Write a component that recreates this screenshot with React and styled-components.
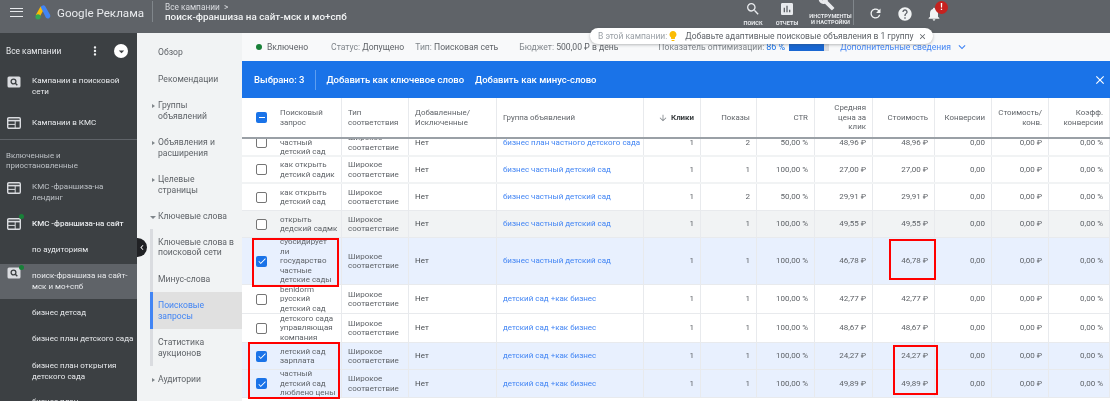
import React from "react"
import styled, { createGlobalStyle } from "styled-components"
import {
  MdSearch,
  MdAssessment,
  MdBuild,
  MdRefresh,
  MdHelp,
  MdNotifications,
  MdClose,
  MdLightbulb,
  MdArrowDownward,
  MdExpandMore,
  MdChevronLeft,
  MdMoreVert,
  MdArrowDropDown,
  MdCheck,
} from "react-icons/md"

const columns = "100px 67px 88px 147px 57px 56px 58px 58px 62px 57px 57px 61px"

const GlobalStyle = createGlobalStyle`
  html, body {
    margin: 0;
    padding: 0;
    background: #fff;
  }
  body {
    font-family: Roboto, "Liberation Sans", sans-serif;
    -webkit-font-smoothing: antialiased;
  }
`

const Shell = styled.div`
  position: relative;
  width: 1110px;
  height: 401px;
  overflow: hidden;
  display: flex;
  flex-direction: column;
  filter: blur(0.35px);
  will-change: transform;
`

const TopBar = styled.header`
  flex: 0 0 33px;
  display: flex;
  align-items: center;
  background: #5f6368;
  color: #fff;
  padding-right: 162px;
  overflow: hidden;
`

const Burger = styled.div`
  width: 13px;
  height: 9px;
  margin-left: 10px;
  border-top: 1.5px solid #e8eaed;
  border-bottom: 1.5px solid #e8eaed;
  position: relative;
  box-sizing: border-box;
  margin-top: -9px;
  &:after {
    content: "";
    position: absolute;
    left: 0;
    right: 0;
    top: 2.2px;
    height: 1.5px;
    background: #e8eaed;
  }
`

const Logo = styled.svg`
  width: 16px;
  height: 15px;
  margin-left: 12px;
  margin-top: -9px;
`

const Brand = styled.div`
  margin-left: 6px;
  margin-top: -8px;
  width: 87px;
  font-size: 11.6px;
  color: #e8eaed;
  white-space: nowrap;
`

const TopDivider = styled.div`
  width: 1px;
  height: 21px;
  margin: -10px 0 0 8px;
  background: #80868b;
`

const Crumbs = styled.div`
  margin: -9px 0 0 12px;
  line-height: 10px;
`

const CrumbTop = styled.div`
  font-size: 8.3px;
  color: #dadce0;
`

const CrumbTitle = styled.div`
  font-size: 9.85px;
  font-weight: 500;
  color: #f1f3f4;
  white-space: nowrap;
`

const Tools = styled.div`
  margin-left: auto;
  display: flex;
  align-items: flex-start;
  height: 33px;
`

const Tool = styled.div`
  width: ${(p) => p.$w}px;
  height: 33px;
  margin-left: ${(p) => p.$ml || 0}px;
  display: flex;
  flex-direction: column;
  align-items: center;
  box-sizing: border-box;
  padding-top: 1px;
  font-size: 5.6px;
  font-weight: 700;
  line-height: 6px;
  text-align: center;
  color: #e8eaed;
  text-transform: uppercase;
  svg {
    flex: 0 0 auto;
    margin-bottom: 3px;
  }
`

const ToolsDivider = styled.div`
  width: 1px;
  height: 25px;
  margin-right: 7px;
  background: #80868b;
`

const IconButton = styled.div`
  position: relative;
  width: 29px;
  height: 27px;
  display: flex;
  align-items: center;
  justify-content: center;
  color: #f1f3f4;
`

const Badge = styled.span`
  position: absolute;
  top: 1px;
  left: 16px;
  width: 13px;
  height: 13px;
  border-radius: 50%;
  background: #c5221f;
  color: #fff;
  font-size: 9px;
  font-weight: 700;
  line-height: 13px;
  text-align: center;
`

const Body = styled.div`
  flex: 1;
  display: flex;
  min-height: 0;
`

const Sidebar = styled.aside`
  flex: 0 0 137px;
  background: #3c4043;
  color: #e8eaed;
  font-size: 8px;
  line-height: 10.5px;
  overflow: hidden;
`

const SideHead = styled.div`
  height: 36px;
  display: flex;
  align-items: center;
  padding: 0 9px 0 6px;
  box-sizing: border-box;
  font-size: 8.4px;
  svg {
    color: #f1f3f4;
  }
`

const HeadDots = styled.div`
  margin-left: auto;
  display: flex;
`

const HeadRound = styled.div`
  width: 14px;
  height: 14px;
  margin-left: 12px;
  border-radius: 50%;
  background: #fff;
  display: flex;
  align-items: center;
  justify-content: center;
  svg {
    color: #3c4043;
  }
`

const SideItem = styled.div`
  position: relative;
  display: flex;
  align-items: center;
  height: ${(p) => p.$h || 26}px;
  margin-bottom: ${(p) => p.$mb || 0}px;
  padding: 0 1px 0 32px;
  box-sizing: border-box;
  color: ${(p) => (p.$muted ? "#bdc1c6" : "#e8eaed")};
  font-weight: ${(p) => (p.$strong ? 500 : 400)};
  background: ${(p) => (p.$active ? "#5f6368" : "transparent")};
  &:after {
    content: "";
    display: ${(p) => (p.$dot ? "block" : "none")};
    position: absolute;
    left: 19px;
    top: ${(p) => (p.$dot === "top" ? 1 : 3)}px;
    width: 5px;
    height: 5px;
    border-radius: 50%;
    background: #188038;
  }
`

const SideIcon = styled.svg`
  position: absolute;
  left: 7px;
  top: 50%;
  margin-top: ${(p) => p.$mt || -6}px;
  width: 14px;
  height: 12px;
`

const SideRule = styled.div`
  height: 1px;
  margin-top: 3px;
  background: #5f6368;
`

const SideLabel = styled.div`
  height: 35px;
  padding: 11px 4px 0 6px;
  box-sizing: border-box;
  color: #bdc1c6;
  font-size: 7.9px;
  line-height: 9.5px;
`

const Collapse = styled.div`
  position: absolute;
  left: 137px;
  top: 238px;
  width: 10px;
  height: 19px;
  border-radius: 0 10px 10px 0;
  background: #202124;
  color: #fff;
  display: flex;
  align-items: center;
  justify-content: center;
  z-index: 3;
`

const Nav = styled.nav`
  flex: 0 0 105px;
  background: #f1f3f4;
  color: #5f6368;
  font-size: 8.6px;
  line-height: 10.5px;
  padding-top: 6px;
  box-sizing: border-box;
  overflow: hidden;
`

const NavItem = styled.div`
  position: relative;
  padding: 8px 6px 8px 21px;
`

const NavCaret = styled.span`
  position: absolute;
  left: 13px;
  top: ${(p) => (p.$open ? 13 : 12)}px;
  width: 0;
  height: 0;
  ${(p) =>
    p.$open
      ? `border-left: 3px solid transparent; border-right: 3px solid transparent; border-top: 3px solid #80868b;`
      : `border-top: 2.5px solid transparent; border-bottom: 2.5px solid transparent; border-left: 3px solid #80868b; left: 15px;`}
`

const SubNav = styled.div`
  margin-left: 13px;
  border-left: 3px solid #dadce0;
  margin-top: -1px;
`

const SubItem = styled.div`
  padding: 8px 6px 8px 5px;
  background: ${(p) => (p.$active ? "#e0e0e0" : "transparent")};
  color: ${(p) => (p.$active ? "#4285f4" : "#5f6368")};
  position: relative;
  &:before {
    content: "";
    display: ${(p) => (p.$active ? "block" : "none")};
    position: absolute;
    left: -3px;
    top: 0;
    bottom: 0;
    width: 3px;
    background: #4285f4;
  }
`

const Main = styled.main`
  flex: 1;
  min-width: 0;
  display: flex;
  flex-direction: column;
  background: #fff;
`

const StatusRow = styled.div`
  flex: 0 0 28px;
  display: flex;
  align-items: center;
  background: #f8f9fa;
  font-size: 8.6px;
  color: #80868b;
  padding-left: 14px;
  box-sizing: border-box;
  white-space: nowrap;
`

const StatusItem = styled.span`
  margin-left: ${(p) => p.$ml || 0}px;
  b {
    font-weight: 400;
    color: #5f6368;
  }
`

const GreenDot = styled.span`
  width: 6px;
  height: 6px;
  border-radius: 50%;
  background: #188038;
  margin-right: 5px;
`

const Score = styled.span`
  color: #1a73e8;
  margin-left: 2px;
  font-size: 9px;
`

const ScoreBar = styled.span`
  display: block;
  width: 40px;
  height: 7px;
  margin-left: 4px;
  background: #dadce0;
  span {
    display: block;
    height: 100%;
    background: #1967d2;
  }
`

const MoreLink = styled.span`
  display: flex;
  align-items: center;
  margin-left: 11px;
  color: #4285f4;
  svg {
    margin-left: 4px;
  }
`

const SelectBar = styled.div`
  flex: 0 0 37px;
  display: flex;
  align-items: center;
  background: #1a73e8;
  color: #fff;
  font-size: 9.5px;
  font-weight: 500;
  padding-left: 12px;
  box-sizing: border-box;
  white-space: nowrap;
`

const BarSplit = styled.span`
  width: 1px;
  height: 20px;
  margin: 0 10px 0 11px;
  background: #5e9ef0;
`

const BarAction = styled.span`
  margin-right: 11px;
`

const BarClose = styled.span`
  margin-left: auto;
  margin-right: 3px;
  display: flex;
`

const HeadRow = styled.div`
  flex: 0 0 41px;
  display: grid;
  grid-template-columns: ${columns};
  box-sizing: border-box;
  border-bottom: 2px solid #9aa0a6;
  font-size: 7.9px;
  line-height: 9.4px;
  color: #5f6368;
`

const HeadCell = styled.div`
  display: flex;
  align-items: center;
  justify-content: ${(p) => (p.$right ? "flex-end" : "flex-start")};
  text-align: ${(p) => (p.$right ? "right" : "left")};
  padding: ${(p) => (p.$first ? "0 4px 0 14px" : "0 6px")};
  border-right: 1px solid #e8eaed;
  font-weight: ${(p) => (p.$sorted ? 700 : 400)};
  color: ${(p) => (p.$sorted ? "#3c4043" : "#5f6368")};
  svg {
    margin-right: 3px;
    color: #80868b;
  }
`

const FirstCell = styled.div`
  display: flex;
  align-items: center;
  width: 100%;
`

const Box = styled.span`
  flex: 0 0 11px;
  width: 11px;
  height: 11px;
  margin-right: 13px;
  box-sizing: border-box;
  border-radius: 2px;
  display: flex;
  align-items: center;
  justify-content: center;
  color: #fff;
  border: ${(p) => (p.$on ? "none" : "1.3px solid #757575")};
  background: ${(p) => (p.$on ? "#1a73e8" : "#fff")};
`

const MinusBar = styled.span`
  display: block;
  width: 6px;
  height: 1.6px;
  background: #fff;
`

const Scroller = styled.div`
  flex: 1;
  min-height: 0;
  overflow: hidden;
`

const RowList = styled.div`
  margin-top: -9px;
`

const Row = styled.div`
  display: grid;
  grid-template-columns: ${columns};
  height: ${(p) => p.$h}px;
  box-sizing: border-box;
  border-bottom: ${(p) => (p.$thick ? "2px solid #f1f3f4" : "1px solid #e8eaed")};
  font-size: 8px;
  line-height: 9.5px;
  color: #5f6368;
  background: ${(p) =>
    p.$tone === "selected" ? "#e8f0fe" : p.$tone === "gray" ? "#f1f3f4" : "#fff"};
`

const Cell = styled.div`
  display: flex;
  align-items: center;
  justify-content: ${(p) => (p.$right ? "flex-end" : "flex-start")};
  padding: ${(p) => (p.$first ? "0 0 0 14px" : "0 6px")};
  border-right: 1px solid #e8eaed;
  overflow: hidden;
  white-space: ${(p) => (p.$nowrap ? "nowrap" : "normal")};
  color: ${(p) => (p.$link ? "#4285f4" : p.$dark ? "#4a4e52" : "inherit")};
`

const QueryText = styled.span`
  white-space: pre-line;
`

const Mark = styled.div`
  position: absolute;
  left: ${(p) => p.$x}px;
  top: ${(p) => p.$y}px;
  width: ${(p) => p.$w}px;
  height: ${(p) => p.$h}px;
  box-sizing: border-box;
  border: 2px solid #f00;
  z-index: 2;
`

const Pill = styled.div`
  position: absolute;
  left: 590px;
  top: 28px;
  width: 343px;
  height: 16px;
  box-sizing: border-box;
  padding: 0 6px 0 8px;
  border-radius: 8px;
  background: #fff;
  box-shadow: 0 1px 3px rgba(60, 64, 67, 0.35);
  display: flex;
  align-items: center;
  font-size: 8.5px;
  color: #5f6368;
  white-space: nowrap;
  z-index: 4;
`

const PillLabel = styled.span`
  color: #9aa0a6;
`

const PillBulb = styled.span`
  display: flex;
  color: #fbbc04;
  margin: 0 6px 0 0;
`

const PillClose = styled.span`
  display: flex;
  margin-left: auto;
  color: #5f6368;
`

const rows = [
  { q: "бизнес\nчастный\nдетский сад", g: "бизнес план частного детского сада", s: 2, ctr: "50,00", cpc: "48,96", h: 27, thick: true },
  { q: "как открыть\nдетсикй садик", g: "бизнес частный детский сад", s: 1, ctr: "100,00", cpc: "27,00", h: 27, thick: true },
  { q: "как открыть\nдетский сад", g: "бизнес частный детский сад", s: 2, ctr: "50,00", cpc: "29,91", h: 27 },
  { q: "открыть\nдедский садмк", g: "бизнес частный детский сад", s: 1, ctr: "100,00", cpc: "49,55", h: 27, tone: "gray" },
  { q: "субсидирует\nли\nгосударство\nчастные\nдетские сады", g: "бизнес частный детский сад", s: 1, ctr: "100,00", cpc: "46,78", h: 47, tone: "selected", on: true },
  { q: "benidorm\nрусский\nдетский сад", g: "детский сад +как бизнес", s: 1, ctr: "100,00", cpc: "42,77", h: 29 },
  { q: "детского сада\nуправляющая\nкомпания", g: "детский сад +как бизнес", s: 1, ctr: "100,00", cpc: "48,67", h: 29 },
  { q: "летский сад\nзарплата", g: "детский сад +как бизнес", s: 1, ctr: "100,00", cpc: "24,27", h: 27, tone: "selected", on: true },
  { q: "частный\nдетский сад\nлюблено цены", g: "детский сад +как бизнес", s: 1, ctr: "100,00", cpc: "49,89", h: 28, tone: "selected", on: true },
]

const heads = [
  { t: "Тип соответствия" },
  { t: "Добавленные/ Исключенные" },
  { t: "Группа объявлений" },
  { t: "Клики", right: true, sorted: true },
  { t: "Показы", right: true },
  { t: "CTR", right: true },
  { t: "Средняя цена за клик", right: true },
  { t: "Стоимость", right: true },
  { t: "Конверсии", right: true },
  { t: "Стоимость/ конв.", right: true },
  { t: "Коэфф. конверсии", right: true },
]

const SearchBadge = (props) => (
  <SideIcon viewBox="0 0 14 12" {...props}>
    <rect x="0.5" y="0.5" width="13" height="11" rx="1.5" fill="#dadce0" />
    <circle cx="6.5" cy="5.5" r="2.4" fill="none" stroke="#3c4043" strokeWidth="1.3" />
    <path d="M8.3 7.3l2 2" stroke="#3c4043" strokeWidth="1.4" />
  </SideIcon>
)

const DisplayBadge = (props) => (
  <SideIcon viewBox="0 0 14 12" {...props}>
    <rect x="0.7" y="0.7" width="12.6" height="10.6" rx="1.2" fill="none" stroke="#dadce0" strokeWidth="1.4" />
    <path d="M0.7 3.6h12.6" stroke="#dadce0" strokeWidth="1.6" />
    <path d="M8.2 4v7" stroke="#dadce0" strokeWidth="1" />
    <path d="M1 7.4h7" stroke="#dadce0" strokeWidth="1" />
  </SideIcon>
)

const App = () => {
  return (
    <Shell>
      <GlobalStyle />
      <TopBar>
        <Burger />
        <Logo viewBox="0 0 16 15">
          <path d="M5.6 1.5L0.8 10l3.6 2.2L9.4 3.6z" fill="#fbbc04" />
          <path d="M5.8 2.2a2.6 2.6 0 0 1 4.4-1L15.2 10a2.6 2.6 0 0 1-4.4 2.6z" fill="#4285f4" />
          <circle cx="3" cy="11.8" r="2.6" fill="#34a853" />
        </Logo>
        <Brand>Google Реклама</Brand>
        <TopDivider />
        <Crumbs>
          <CrumbTop>Все кампании &nbsp;&gt;</CrumbTop>
          <CrumbTitle>поиск-франшиза на сайт-мск и мо+спб</CrumbTitle>
        </Crumbs>
        <Tools>
          <Tool $w={34}>
            <MdSearch size={16} />
            Поиск
          </Tool>
          <Tool $w={34}>
            <MdAssessment size={16} />
            Отчеты
          </Tool>
          <Tool $w={45} $ml={4}>
            <MdBuild size={17} style={{ marginTop: -7, marginLeft: -8, marginBottom: 2 }} />
            Инструменты и настройки
          </Tool>
          <ToolsDivider />
          <IconButton>
            <MdRefresh size={15} />
          </IconButton>
          <IconButton>
            <MdHelp size={16} />
          </IconButton>
          <IconButton>
            <MdNotifications size={16} />
            <Badge>!</Badge>
          </IconButton>
        </Tools>
      </TopBar>

      <Body>
        <Sidebar>
          <SideHead>
            Все кампании
            <HeadDots>
              <MdMoreVert size={14} />
            </HeadDots>
            <HeadRound>
              <MdArrowDropDown size={13} />
            </HeadRound>
          </SideHead>
          <SideItem $h={35} $mb={6}>
            <SearchBadge $mt={-11} />
            <span>Кампании в поисковой сети</span>
          </SideItem>
          <SideItem>
            <DisplayBadge />
            <span>Кампании в КМС</span>
          </SideItem>
          <SideRule />
          <SideLabel>Включенные и приостановленные</SideLabel>
          <SideItem $h={35} $mb={1} $muted>
            <DisplayBadge $mt={-11} />
            <span>КМС -франшиза-на лендинг</span>
          </SideItem>
          <SideItem $strong $dot="mid">
            <DisplayBadge />
            <span>КМС -франшиза-на сайт</span>
          </SideItem>
          <SideItem $mb={1}>по аудиториям</SideItem>
          <SideItem $h={35} $mb={1} $active $dot="top">
            <SearchBadge $mt={-15} />
            <span>поиск-франшиза на сайт-мск и мо+спб</span>
          </SideItem>
          <SideItem>бизнес детсад</SideItem>
          <SideItem $mb={2}>бизнес план детского сада</SideItem>
          <SideItem $h={35}>бизнес план открытия детского сада</SideItem>
          <SideItem>бизнес план</SideItem>
        </Sidebar>
        <Collapse>
          <MdChevronLeft size={13} />
        </Collapse>

        <Nav>
          <NavItem>Обзор</NavItem>
          <NavItem>Рекомендации</NavItem>
          <NavItem>
            <NavCaret />
            Группы объявлений
          </NavItem>
          <NavItem>
            <NavCaret />
            Объявления и расширения
          </NavItem>
          <NavItem>
            <NavCaret />
            Целевые страницы
          </NavItem>
          <NavItem>
            <NavCaret $open />
            Ключевые слова
          </NavItem>
          <SubNav>
            <SubItem>Ключевые слова в поисковой сети</SubItem>
            <SubItem>Минус-слова</SubItem>
            <SubItem $active>Поисковые запросы</SubItem>
            <SubItem>Статистика аукционов</SubItem>
          </SubNav>
          <NavItem>
            <NavCaret />
            Аудитории
          </NavItem>
        </Nav>

        <Main>
          <StatusRow>
            <GreenDot />
            <StatusItem>
              <b>Включено</b>
            </StatusItem>
            <StatusItem $ml={23}>
              Статус: <b>Допущено</b>
            </StatusItem>
            <StatusItem $ml={11}>
              Тип: <b>Поисковая сеть</b>
            </StatusItem>
            <StatusItem $ml={21}>
              Бюджет: <b>500,00 ₽ в день</b>
            </StatusItem>
            <StatusItem $ml={40}>Показатель оптимизации:</StatusItem>
            <Score>86 %</Score>
            <ScoreBar>
              <span style={{ width: "86%" }} />
            </ScoreBar>
            <MoreLink>
              Дополнительные сведения
              <MdExpandMore size={14} />
            </MoreLink>
          </StatusRow>

          <SelectBar>
            Выбрано: 3
            <BarSplit />
            <BarAction>Добавить как ключевое слово</BarAction>
            <BarAction>Добавить как минус-слово</BarAction>
            <BarClose>
              <MdClose size={14} />
            </BarClose>
          </SelectBar>

          <HeadRow>
            <HeadCell $first>
              <FirstCell>
                <Box $on>
                  <MinusBar />
                </Box>
                <span>Поисковый запрос</span>
              </FirstCell>
            </HeadCell>
            {heads.map((h) => (
              <HeadCell key={h.t} $right={h.right} $sorted={h.sorted}>
                {h.sorted && <MdArrowDownward size={10} />}
                <span>{h.t}</span>
              </HeadCell>
            ))}
          </HeadRow>

          <Scroller>
            <RowList>
              {rows.map((r) => (
                <Row key={r.q} $h={r.h} $tone={r.tone} $thick={r.thick}>
                  <Cell $first>
                    <FirstCell>
                      <Box $on={r.on}>{r.on && <MdCheck size={10} />}</Box>
                      <QueryText>{r.q}</QueryText>
                    </FirstCell>
                  </Cell>
                  <Cell>Широкое соответствие</Cell>
                  <Cell $dark>Нет</Cell>
                  <Cell $link $nowrap>
                    {r.g}
                  </Cell>
                  <Cell $right>1</Cell>
                  <Cell $right>{r.s}</Cell>
                  <Cell $right $nowrap>
                    {r.ctr} %
                  </Cell>
                  <Cell $right $nowrap>
                    {r.cpc} ₽
                  </Cell>
                  <Cell $right $nowrap>
                    {r.cpc} ₽
                  </Cell>
                  <Cell $right>0,00</Cell>
                  <Cell $right $nowrap>
                    0,00 ₽
                  </Cell>
                  <Cell $right $nowrap>
                    0,00 %
                  </Cell>
                </Row>
              ))}
            </RowList>
          </Scroller>
        </Main>
      </Body>

      <Pill>
        <PillLabel>В этой кампании:</PillLabel>
        <PillBulb>
          <MdLightbulb size={12} />
        </PillBulb>
        Добавьте адаптивные поисковые объявления в 1 группу
        <PillClose>
          <MdClose size={9} />
        </PillClose>
      </Pill>

      <Mark $x={252} $y={238} $w={87} $h={49} />
      <Mark $x={248} $y={342} $w={92} $h={57} />
      <Mark $x={889} $y={239} $w={47} $h={41} />
      <Mark $x={893} $y={345} $w={45} $h={50} />
    </Shell>
  )
}

export default App
